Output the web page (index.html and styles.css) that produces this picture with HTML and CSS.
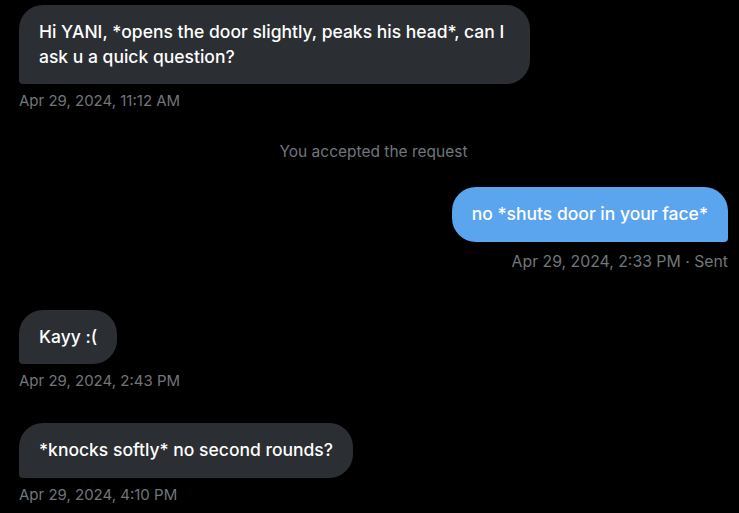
FILE: index.html
```html
<!DOCTYPE html>
<html lang="en">

<head>
  <meta charset="UTF-8" />
  <meta name="viewport" content="width=device-width, initial-scale=1" />
  <title>Messages</title>
  <link rel="stylesheet" href="styles.css">
</head>

<body>
  <div class="thread">
    <div class="msg received first">
      <div class="bubble">Hi YANI, *opens the door slightly, peaks his head*, can I ask u a quick question?</div>
      <div class="meta">Apr 29, 2024, 11:12 AM</div>
    </div>

    <div class="notice">You accepted the request</div>

    <div class="msg sent">
      <div class="bubble">no *shuts door in your face*</div>
      <div class="meta">Apr 29, 2024, 2:33 PM · Sent</div>
    </div>

    <div class="msg received">
      <div class="bubble">Kayy :(</div>
      <div class="meta">Apr 29, 2024, 2:43 PM</div>
    </div>

    <div class="msg received">
      <div class="bubble">*knocks softly* no second rounds?</div>
      <div class="meta">Apr 29, 2024, 4:10 PM</div>
    </div>
  </div>
</body>

</html>
```

FILE: styles.css
```css
body {
  margin: 0;
  padding: 0;
  background: #000;
  font-family: Inter, 'Noto Sans', sans-serif;
  color: #e7e9ea;
}

.thread {
  display: flex;
  flex-direction: column;
  padding: 5px 11px 0 19px;
}

.msg {
  display: flex;
  flex-direction: column;
  align-items: flex-start;
}

.msg.sent {
  align-items: flex-end;
  margin-top: 25px;
}

.msg.received {
  margin-top: 38px;
}

.msg.received.first {
  margin-top: 0;
}

.msg.received:last-child {
  margin-top: 32px;
}

.bubble {
  max-width: 471px;
  padding: 15px 20px;
  font-size: 17.5px;
  line-height: 24.5px;
  font-weight: 500;
  color: #fff;
  border-radius: 24px;
}

.received .bubble {
  background: #2b2e32;
  border-bottom-left-radius: 4px;
}

.sent .bubble {
  background: #5aa5ee;
  border-bottom-right-radius: 4px;
}

.meta {
  margin-top: 7px;
  font-size: 15px;
  line-height: 20px;
  color: #71767b;
}

.sent .meta {
  margin-top: 10px;
  font-size: 15.8px;
}

.notice {
  margin-top: 31px;
  text-align: center;
  font-size: 15.5px;
  line-height: 20px;
  color: #71767b;
}
```
